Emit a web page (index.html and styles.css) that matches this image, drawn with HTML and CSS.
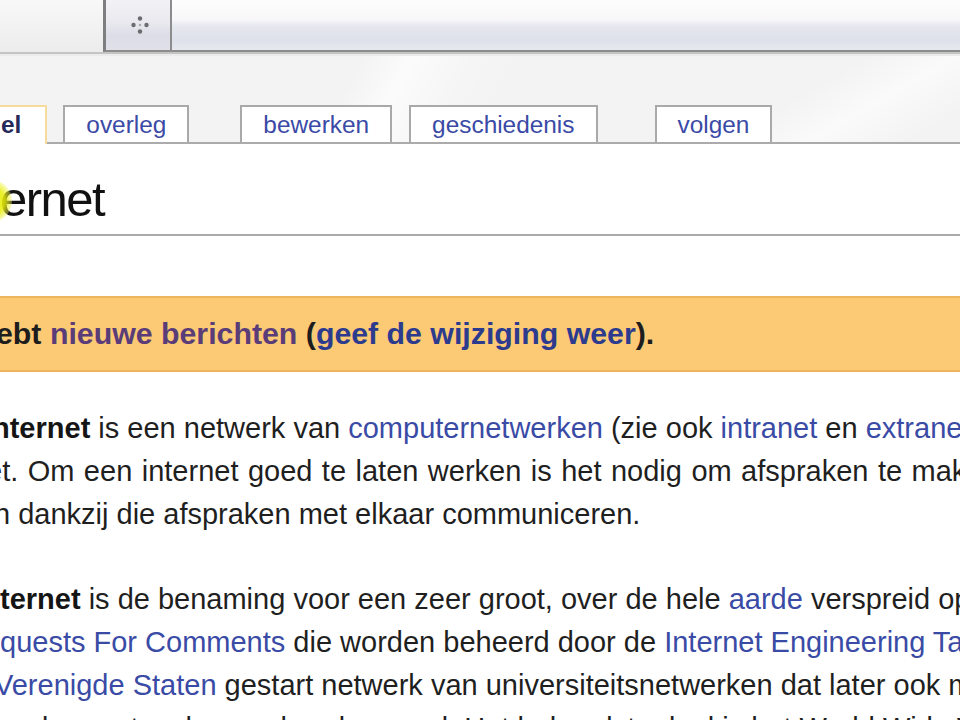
FILE: index.html
```html
<!DOCTYPE html>
<html lang="nl">
<head>
<meta charset="utf-8">
<title>Internet - Wikipedia</title>
<link rel="stylesheet" href="styles.css">
</head>
<body>
<div class="chrome">
  <div class="ctab"></div>
  <div class="newtab">
    <svg class="plus" width="18" height="18" viewBox="0 0 18 18">
      <circle cx="9" cy="2.5" r="2.2" fill="#6b6b70"/>
      <circle cx="2.5" cy="9" r="2.2" fill="#6b6b70"/>
      <circle cx="15.5" cy="9" r="2.2" fill="#6b6b70"/>
      <circle cx="9" cy="15.5" r="2.2" fill="#6b6b70"/>
      <circle cx="9" cy="9" r="1.3" fill="#a9a9b0"/>
    </svg>
  </div>
  <div class="strip"></div>
</div>
<div class="chrome-rule"></div>
<div class="head">
  <ul class="tabs">
    <li class="tab sel">el</li>
    <li class="tab t-overleg">overleg</li>
    <li class="tab t-bewerken">bewerken</li>
    <li class="tab t-gesch">geschiedenis</li>
    <li class="tab t-volgen">volgen</li>
  </ul>
</div>
<div class="content">
  <div class="glow"></div>
  <h1 class="title">ernet</h1>
  <div class="msg"><span class="m-in">ebt <a class="visited">nieuwe berichten</a> (<a class="lnk">geef de wijziging weer</a>).</span></div>
  <p class="para">
    <span class="ln off-8"><b>nternet</b> is een netwerk van <a>computernetwerken</a> (zie ook <a>intranet</a> en <a>extranet</a>)</span>
    <span class="ln off-14 wide">et. Om een internet goed te laten werken is het nodig om afspraken te maken</span>
    <span class="ln off-6">n dankzij die afspraken met elkaar communiceren.</span>
  </p>
  <p class="para p2">
    <span class="ln"><b>ternet</b> is de benaming voor een zeer groot, over de hele <a>aarde</a> verspreid openbaar</span>
    <span class="ln"><a>quests For Comments</a> die worden beheerd door de <a>Internet Engineering Task Force</a></span>
    <span class="ln off-6"><a>Verenigde Staten</a> gestart netwerk van universiteitsnetwerken dat later ook met</span>
    <span class="ln">andere netwerken verbonden werd. Het bekendste deel is het World Wide Web.</span>
  </p>
</div>
</body>
</html>
```
FILE: styles.css
```css
html, body {
  margin: 0;
  padding: 0;
}
body {
  width: 960px;
  height: 720px;
  overflow: hidden;
  background: #ffffff;
  font-family: "Liberation Sans", Arial, sans-serif;
  color: #1f1f1f;
}

/* browser chrome */
.chrome {
  display: flex;
  height: 52px;
}
.ctab {
  width: 103px;
  background: linear-gradient(to bottom, #f8f8f8 0%, #f1f1f1 60%, #ececec 100%);
}
.newtab {
  width: 69px;
  box-sizing: border-box;
  border-left: 3px solid #7e7e80;
  border-right: 2px solid #8c8c8e;
  border-bottom: 2px solid #8c8c8c;
  background: linear-gradient(to bottom, #f2f2f6 0%, #e9e9ef 45%, #dcdde6 70%, #dfe0e8 100%);
  display: flex;
  align-items: center;
  justify-content: center;
  padding-left: 4px;
}
.plus {
  display: block;
}
.strip {
  flex: 1;
  box-sizing: border-box;
  border-bottom: 2px solid #8c8c8c;
  background: linear-gradient(to bottom, #fdfdfd 0%, #f8f8fa 38%, #e6e8ef 52%, #dee1ea 80%, #e7e9ef 100%);
}
.chrome-rule {
  height: 2px;
  background: #c4c4c4;
  border-bottom: 2px solid #ebebeb;
}

/* wiki header with tabs */
.head {
  padding-top: 49px;
  background-color: #f3f3f3;
  background-image:
    linear-gradient(118deg, transparent 36%, rgba(255,255,255,0.7) 41%, rgba(255,255,255,0.2) 47%, transparent 52%),
    linear-gradient(150deg, transparent 78%, rgba(255,255,255,0.6) 86%, transparent 95%);
}
.tabs {
  list-style: none;
  margin: 0 0 -2px 0;
  padding: 0;
  display: flex;
  align-items: flex-end;
  position: relative;
  z-index: 1;
}
.tab {
  box-sizing: border-box;
  height: 37px;
  margin-bottom: 2px;
  padding: 0 21px;
  border: 2px solid #a9a9a9;
  border-bottom: none;
  background: #ffffff;
  font-size: 24.4px;
  line-height: 35px;
  color: #3a4aa6;
}
.tab.sel {
  height: 39px;
  margin-bottom: 0;
  margin-left: -22px;
  padding-right: 24px;
  border-color: #f3dc9c;
  font-weight: bold;
  color: #262a5a;
}
.t-overleg { margin-left: 16px; }
.t-bewerken { margin-left: 51px; }
.t-gesch { margin-left: 17px; }
.t-volgen { margin-left: 57px; }

/* content */
.content {
  position: relative;
  border-top: 2px solid #ababab;
  background: #ffffff;
}
.glow {
  position: absolute;
  left: -28px;
  top: 36px;
  width: 40px;
  height: 42px;
  border-radius: 50%;
  background: radial-gradient(ellipse at center, rgba(226,234,0,0.95) 0%, rgba(232,238,10,0.85) 45%, rgba(245,245,120,0.35) 72%, rgba(255,255,255,0) 100%);
  z-index: 2;
}
.title {
  margin: 23px 0 0 -18px;
  padding: 0 0 3px 18px;
  font-size: 49px;
  line-height: 64px;
  letter-spacing: -1.5px;
  font-weight: normal;
  color: #111111;
  border-bottom: 2px solid #aaaaaa;
}
.msg {
  margin-top: 60px;
  height: 76px;
  box-sizing: border-box;
  border-top: 2px solid #edb55e;
  border-bottom: 2px solid #edb45b;
  background: #fcc974;
  font-size: 30.3px;
  font-weight: bold;
  line-height: 72px;
  color: #1d1d1d;
  white-space: nowrap;
}
.m-in {
  display: inline-block;
  margin-left: -4px;
}
.msg .visited { color: #5a3c78; }
.msg .lnk { color: #2c3b8e; }

.para {
  margin: 34.5px 0 0 0;
  font-size: 29px;
  line-height: 43px;
}
.para.p2 {
  margin-top: 42px;
}
.ln {
  display: block;
  white-space: nowrap;
}
.ln.wide {
  word-spacing: 1.4px;
}
.off-8 { margin-left: -8px; }
.off-14 { margin-left: -14px; }
.off-6 { margin-left: -6px; }
.para a {
  color: #3a4ba6;
  text-decoration: none;
}
.para b {
  color: #151515;
}
```
